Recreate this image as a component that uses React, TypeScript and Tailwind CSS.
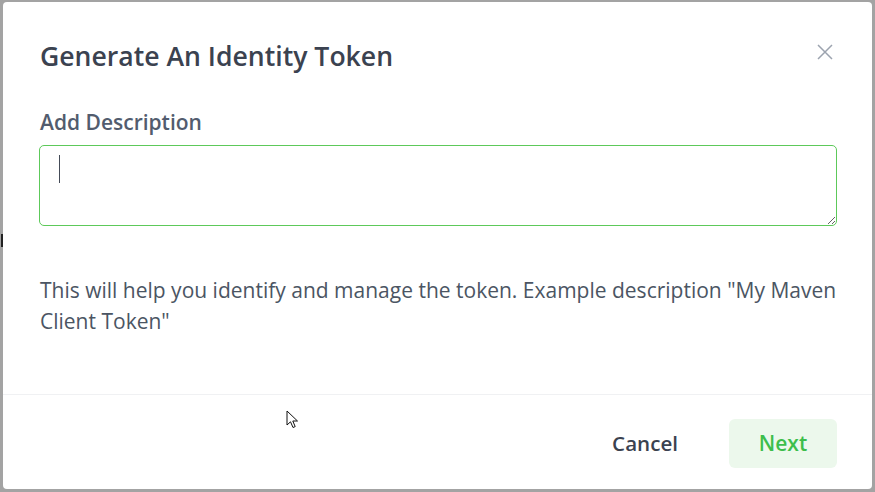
import React from "react";

function CloseIcon() {
  return (
    <svg width="16" height="16" viewBox="0 0 16 16" fill="none">
      <path d="M1 1L15 15M15 1L1 15" stroke="#9ca3af" strokeWidth="1.5" />
    </svg>
  );
}

function Pointer() {
  return (
    <svg width="14" height="20" viewBox="0 0 14 20" className="absolute left-[286px] top-[410px]">
      <path
        d="M1 1 L1 15 L4.5 11.8 L7 17.5 L9.2 16.6 L6.8 11 L11.5 11 Z"
        fill="#ffffff"
        stroke="#111111"
        strokeWidth="1"
        strokeLinejoin="round"
      />
    </svg>
  );
}

export default function App() {
  return (
    <div
      className="relative h-[492px] w-[875px] bg-[#a3a3a3] pt-[2px] pl-[3px]"
      style={{ fontFamily: '"Open Sans", "Noto Sans", sans-serif' }}
    >
      <div className="absolute left-[1px] top-[234px] h-[13px] w-[2px] bg-[#222222]" />
      <div className="flex h-[487px] w-[869px] flex-col rounded-[4px] bg-white">
        <div className="flex flex-1 flex-col px-[37px] pt-[36px]">
          <div className="flex items-start justify-between">
            <h2 className="text-[26.6px] leading-[36px] font-semibold text-[#3b4250]">
              Generate An Identity Token
            </h2>
            <button className="mt-[6px] mr-[2px]">
              <CloseIcon />
            </button>
          </div>
          <label className="mt-[34px] text-[21px] leading-[28px] font-semibold text-[#525c6e]">
            Add Description
          </label>
          <div className="relative -ml-px mt-[9px]">
            <textarea className="block h-[81px] w-[798px] resize-y rounded-[5px] border border-[#5dc95a] px-[19px] py-[8px] text-[20px] leading-[30px] text-[#3b4250] outline-none" />
            <div className="absolute left-[20px] top-[10px] h-[28px] w-px bg-[#444b57]" />
          </div>
          <p className="mt-[49px] w-[802px] text-[21px] leading-[31px] text-[#4b5563]">
            This will help you identify and manage the token. Example description "My Maven
            Client Token"
          </p>
        </div>
        <div className="h-px bg-[#f0f1f3]" />
        <div className="flex h-[94px] items-center justify-end gap-[51px] px-[35px] pt-[3px]">
          <button className="text-[20.6px] font-semibold text-[#3b4250]">Cancel</button>
          <button className="h-[49px] w-[108px] rounded-[6px] bg-[#ecf8ec] text-[21px] font-semibold text-[#3dbe4b]">
            Next
          </button>
        </div>
      </div>
      <Pointer />
    </div>
  );
}
